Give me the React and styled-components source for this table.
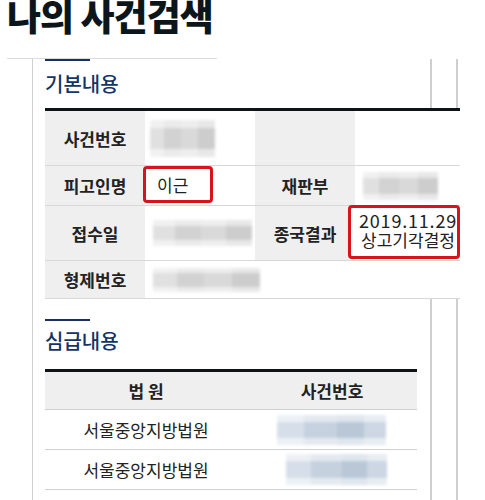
import React from 'react'
import styled, { createGlobalStyle } from 'styled-components'

const GlobalStyle = createGlobalStyle`
  body {
    margin: 0;
    background: #fff;
    font-family: "Noto Sans CJK KR", "Noto Sans", sans-serif;
    color: #222;
  }
`;

const basicRows = [
  { label: '사건번호', value: 'blur', blur: { w: 65, h: 37, ml: 5 }, label2: '', value2: null },
  { label: '피고인명', value: '이근', mark: true, label2: '재판부', value2: 'blur', blur2: { w: 75, h: 28, ml: 8 } },
  { label: '접수일', value: 'blur', blur: { w: 99, h: 26, ml: 8 }, label2: '종국결과', value2: 'result' },
];

const trialRows = [
  { court: '서울중앙지방법원', blur: { w: 109, h: 30, ml: 30 } },
  { court: '서울중앙지방법원', blur: { w: 101, h: 31, ml: 39 } },
];

function App() {
  return (
    <Page>
      <GlobalStyle />
      <TitleBar>
        <Title>나의 사건검색</Title>
      </TitleBar>
      <Frame>
        <Inner>
          <SectionBar />
          <SectionTitle $top={11} $bottom={13}>기본내용</SectionTitle>
          <InfoGrid>
            {basicRows.map((r, i) => (
              <React.Fragment key={i}>
                <Label $h={i === 1 ? 40 : 55}>{r.label}</Label>
                <Value>
                  {r.value === 'blur' && <Blur $w={r.blur.w} $h={r.blur.h} $ml={r.blur.ml} />}
                  {r.mark && <Mark>{r.value}</Mark>}
                </Value>
                <Label $h={i === 1 ? 40 : 55}>{r.label2}</Label>
                <Value>
                  {r.value2 === 'blur' && <Blur $w={r.blur2.w} $h={r.blur2.h} $ml={r.blur2.ml} />}
                  {r.value2 === 'result' && (
                    <ResultMark>
                      <DateLine>2019.11.29</DateLine>
                      <span>상고기각결정</span>
                    </ResultMark>
                  )}
                </Value>
              </React.Fragment>
            ))}
            <Label $h={38}>형제번호</Label>
            <Value $span={3}>
              <Blur $w={107} $h={24} $ml={8} />
            </Value>
          </InfoGrid>

          <SectionBar $top={20} />
          <SectionTitle $top={8} $bottom={17}>심급내용</SectionTitle>
          <TrialGrid>
            <HeadCell>법 원</HeadCell>
            <HeadCell>사건번호</HeadCell>
            {trialRows.map((r, i) => (
              <React.Fragment key={i}>
                <TrialCell>{r.court}</TrialCell>
                <TrialCell $left>
                  <Blur $w={r.blur.w} $h={r.blur.h} $ml={r.blur.ml} $blue />
                </TrialCell>
              </React.Fragment>
            ))}
          </TrialGrid>
        </Inner>
      </Frame>
    </Page>
  )
}

const Page = styled.div`
  width: 485px;
  height: 500px;
  overflow: hidden;
`;

const TitleBar = styled.div`
  display: flow-root;
  margin-left: 7px;
  width: 210px;
  height: 59px;
  box-sizing: border-box;
  border-bottom: 1px solid #dcdcdc;
`;

const Title = styled.h1`
  margin: -3px 0 0 0;
  font-size: 37px;
  line-height: 1;
  font-weight: 900;
  letter-spacing: -1px;
  color: #0c1519;
  white-space: nowrap;
`;

const Frame = styled.div`
  margin-left: 32px;
  width: 426px;
  height: 441px;
  box-sizing: border-box;
  border-left: 1px solid #cfcfcf;
  border-right: 2px solid #cfcfcf;
`;

const Inner = styled.div`
  width: 399px;
  height: 100%;
  box-sizing: border-box;
  padding-left: 12px;
  border-right: 2px solid #cfcfcf;
`;

const SectionBar = styled.div`
  width: 45px;
  height: 2px;
  margin-top: ${p => p.$top || 0}px;
  background: #17305f;
`;

const SectionTitle = styled.h2`
  margin: ${p => p.$top}px 0 ${p => p.$bottom}px;
  font-size: 20px;
  line-height: 23px;
  font-weight: 500;
  color: #163366;
`;

const InfoGrid = styled.div`
  position: relative;
  display: grid;
  grid-template-columns: 100px 110px 100px 105px;
  width: 415px;
  border-top: 3px solid #0d1316;
  background: #fff;
`;

const Label = styled.div`
  height: ${p => p.$h}px;
  box-sizing: border-box;
  display: flex;
  align-items: center;
  justify-content: center;
  background: #efefef;
  border-bottom: 1px solid #d8d8d8;
  font-size: 17px;
  font-weight: 700;
  color: #222;
`;

const Value = styled.div`
  grid-column: span ${p => p.$span || 1};
  box-sizing: border-box;
  display: flex;
  align-items: center;
  border-bottom: 1px solid #d8d8d8;
  font-size: 17px;
`;

const Blur = styled.div`
  width: ${p => p.$w}px;
  height: ${p => p.$h}px;
  margin-left: ${p => p.$ml}px;
  filter: blur(1.5px);
  background:
    linear-gradient(180deg, rgba(255,255,255,0.55) 0 22%, rgba(255,255,255,0) 22% 78%, rgba(255,255,255,0.55) 78% 100%),
    ${p => p.$blue
      ? 'linear-gradient(90deg, #d6dfe9 0 25%, #c5d1de 25% 55%, #b9c7d6 55% 80%, #ccd7e3 80% 100%)'
      : 'linear-gradient(90deg, #e0e0e0 0 22%, #d2d2d2 22% 48%, #d9d9d9 48% 74%, #cdcdcd 74% 100%)'};
`;

const Mark = styled.span`
  display: inline-flex;
  align-items: center;
  margin-left: -2px;
  margin-top: -3px;
  width: 70px;
  height: 37px;
  box-sizing: border-box;
  padding-left: 11px;
  border: 3px solid #d7141b;
  border-radius: 4px;
  background: #fff;
  font-size: 17px;
  color: #222;
`;

const ResultMark = styled.div`
  position: relative;
  display: flex;
  flex-direction: column;
  align-items: center;
  margin-left: -7px;
  margin-top: -2px;
  width: 120px;
  height: 54px;
  box-sizing: border-box;
  padding: 3px 0 0 8px;
  border: 3px solid #d7141b;
  border-radius: 4px;
  background: #fff;
  font-size: 17px;
  line-height: 19px;
  color: #222;
`;

const DateLine = styled.span`
  font-size: 18px;
  letter-spacing: 0.8px;
`;

const TrialGrid = styled.div`
  display: grid;
  grid-template-columns: 202px 170px;
  width: 372px;
  border-top: 3px solid #0d1316;
`;

const HeadCell = styled.div`
  height: 38px;
  box-sizing: border-box;
  display: flex;
  align-items: center;
  justify-content: center;
  background: #efefef;
  border-bottom: 1px solid #cfcfcf;
  font-size: 17px;
  font-weight: 700;
  color: #222;
`;

const TrialCell = styled.div`
  height: 40px;
  box-sizing: border-box;
  display: flex;
  align-items: center;
  justify-content: ${p => (p.$left ? 'flex-start' : 'center')};
  border-bottom: 1px solid #d0d0d0;
  font-size: 17px;
  color: #222;
`;

export default App
